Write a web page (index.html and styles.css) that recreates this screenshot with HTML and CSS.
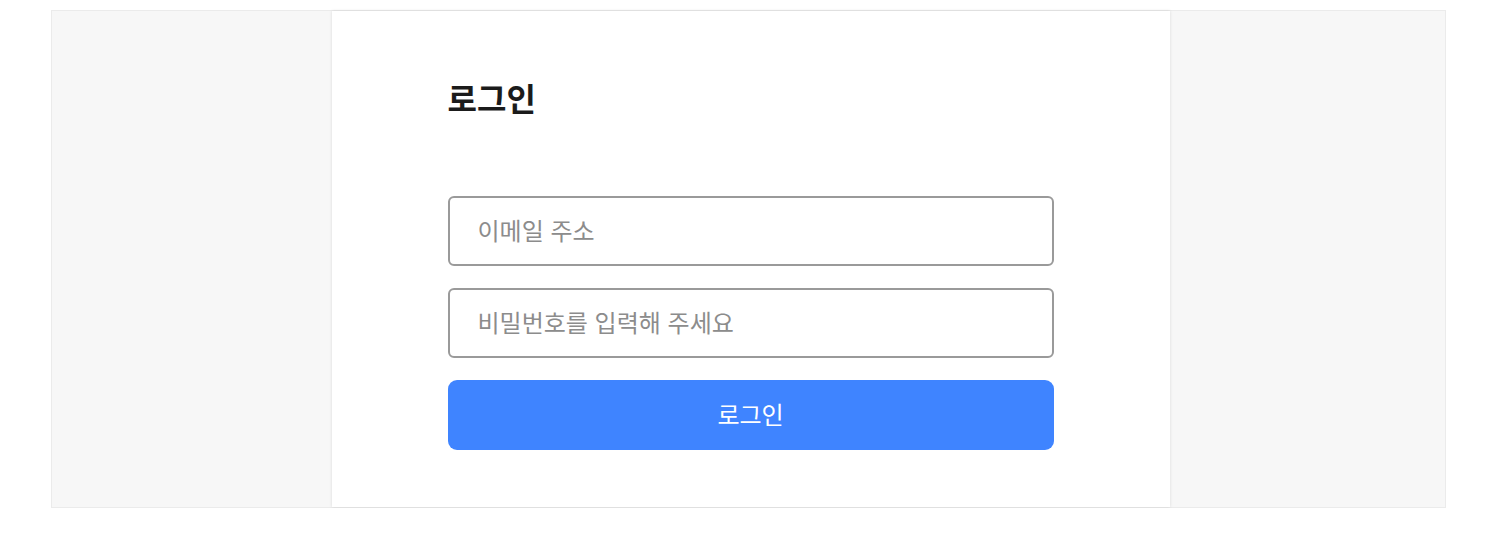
FILE: index.html
```html
<!DOCTYPE html>
<html lang="ko">
<head>
<meta charset="utf-8">
<title>로그인</title>
<link rel="stylesheet" href="styles.css">
</head>
<body>
<div class="frame">
  <main class="card">
    <h1 class="title">로그인</h1>
    <form class="form">
      <input class="field" type="email" placeholder="이메일 주소">
      <input class="field" type="password" placeholder="비밀번호를 입력해 주세요">
      <button class="btn" type="button">로그인</button>
    </form>
  </main>
</div>
</body>
</html>
```
FILE: styles.css
```css
* { box-sizing: border-box; }
html, body { margin: 0; padding: 0; background: #fff; }
body {
  font-family: "Noto Sans CJK KR", "Noto Sans", sans-serif;
  padding: 10px 52px 0 51px;
}
.frame {
  height: 498px;
  border: 1px solid #ebebeb;
  background: #f7f7f7;
  display: flex;
  justify-content: center;
  padding-left: 4px;
}
.card {
  width: 838px;
  background: #fff;
  box-shadow: 0 0 3px rgba(0, 0, 0, 0.12);
  padding: 66px 116px 0;
}
.title {
  margin: 0 0 79px;
  font-size: 32px;
  line-height: 40px;
  font-weight: 700;
  color: #1b1b1b;
}
.form {
  display: flex;
  flex-direction: column;
  gap: 22px;
}
.field {
  height: 70px;
  border: 2px solid #9a9a9a;
  border-radius: 6px;
  padding: 0 28px 3px;
  font-family: inherit;
  font-size: 24px;
  color: #222;
  outline: none;
}
.field::placeholder { color: #8c8c8c; }
.btn {
  height: 70px;
  border: none;
  border-radius: 9px;
  background: #3f84ff;
  color: #fff;
  font-family: inherit;
  font-size: 24px;
  padding: 0 0 3px;
}
```
